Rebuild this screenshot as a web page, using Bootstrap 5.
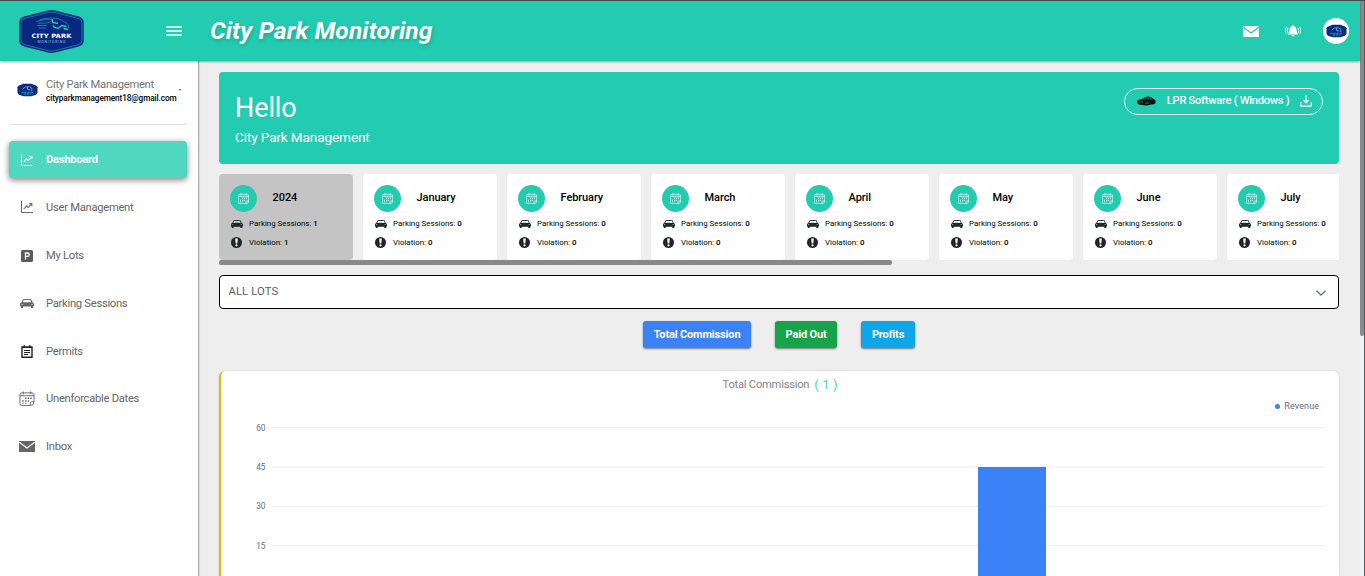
<!DOCTYPE html>
<html lang="en">
<head>
<meta charset="utf-8">
<meta name="viewport" content="width=device-width, initial-scale=1">
<title>City Park Monitoring</title>
<link href="https://cdn.jsdelivr.net/npm/bootstrap@5.3.0/dist/css/bootstrap.min.css" rel="stylesheet">
<style>
:root{--teal:#23ccb0;--navy:#06297f}
body{font-family:Roboto,"Liberation Sans",sans-serif;background:#eee;height:100vh;overflow:hidden;border-top:1px solid #44494b;font-size:11.2px;line-height:1.2}
svg{display:block;flex:none}
.topbar{height:60px;flex-shrink:0;background:var(--teal);box-shadow:0 1px 2px rgba(0,0,0,.35);z-index:3;padding:0 11px 0 19px}
.brand-title{font-size:24.6px;font-weight:700;font-style:italic;color:#fff;text-shadow:1px 2px 4px rgba(0,0,0,.18);margin-left:28px;line-height:28px;letter-spacing:.08px;white-space:nowrap}
.avatar{width:26px;height:26px}
.side{width:199px;border-right:1px solid #b0b0b0;box-shadow:1px 0 1px rgba(0,0,0,.08);padding:0 11px 0 9px;z-index:2}
.profile{height:63.5px;border-bottom:1px solid #e4e4e4;padding:17px 0 0 8px;margin-bottom:16.5px}
.profile-name{font-size:11.2px;color:#757575;line-height:14px;letter-spacing:-.25px}
.mail-line{font-size:8.2px;font-weight:500;color:#000;line-height:13px;letter-spacing:-.08px;white-space:nowrap}
.side-item{height:37.2px;margin-bottom:10.6px;padding-left:9px;color:#666;border-radius:4px;font-size:11.2px;letter-spacing:-.27px}
.side-item.low{padding-top:1.2px}
.side-item .ico{width:18px;margin-right:10px;display:flex;justify-content:center}
.side-item.on{background:#4fd7bf;color:#fff;font-weight:700;box-shadow:0 2px 6px rgba(0,0,0,.5)}
.main-area{padding:11px 21px 0 20px;min-width:0}
.hello{height:92px;background:var(--teal);border-radius:4px;color:#fff;padding:20px 16px 0}
.hello-big{font-size:27px;line-height:32px;letter-spacing:-.1px}
.hello-sub{font-size:13.6px;line-height:18px;margin-top:4px;letter-spacing:-.13px}
.lpr{width:199px;height:27px;border:1px solid #e8fffa;border-radius:14px;margin-top:-4px;padding:0 10px 1px 12px;font-size:11.2px;font-weight:500;letter-spacing:-.3px}
.months{margin-top:10px;height:86px;gap:10px;overflow:hidden}
.month{flex:0 0 134px;background:#fff;border-radius:4px;padding:11px 0 0 11px;color:#000}
.month.on{background:#c4c4c4}
.disc{width:27px;height:27px;background:var(--teal);color:#e9fffb}
.month-name{font-size:11px;font-weight:500;margin-left:15.600px;line-height:25px;letter-spacing:-.1px}
.fact{font-size:7.9px;line-height:12px;padding-left:1px;white-space:pre}
.fact svg{margin-right:6px}
.fact b{font-weight:500}
.thumb-x{width:673px;height:5px;background:#888;border-radius:2px}
.lots{height:34px;margin-top:10px;border:1.2px solid #000;border-radius:4px;background:#fff;color:#5c6169;padding:0 12px 0 8.5px;font-size:11.2px;letter-spacing:.15px}
.acts{margin-top:12px;gap:24px}
.act{height:27px;border:0;border-radius:3px;color:#fff;font-size:11px;font-weight:700;padding:0;box-shadow:0 1px 2px rgba(0,0,0,.5);line-height:27px;letter-spacing:-.16px}
.chart-card{margin-top:23px;height:205px;background:#fff;border-left:2px solid #eab308;border-radius:6px 6px 0 0;box-shadow:0 0 2px rgba(0,0,0,.15)}
.chart-title{font-size:11.2px;color:#858585;padding-top:5px;line-height:16px;height:30px;letter-spacing:-.24px}
.chart-title span{color:#4fd7a9;font-size:13px;margin-left:5px;letter-spacing:.1px;position:relative;top:1px}
.legend-line{font-size:9px;color:#666d78;height:10px;line-height:10px;padding-right:20px;gap:4px;letter-spacing:.1px}
.dot{width:5px;height:5px;background:#3b82f6}
.track{width:4px;background:#f1f1f1}
.thumb-y{height:335px;background:#8a8a8a;border-radius:0 0 2px 2px}
.edge{width:1px;background:#55595c}
</style>
</head>
<body>
<svg width="0" height="0" class="position-absolute" aria-hidden="true">
  <symbol id="crest" viewBox="0 0 65 43">
    <path d="M28 .8Q32.5-.6 37 .8L60 6.5Q64.5 8 64.7 12V31Q64.5 35 60 36.5L37 42.3Q32.5 43.6 28 42.3L5 36.5Q.5 35 .3 31V12Q.5 8 5 6.5Z" fill="#06297f"/>
    <path d="M29 2.5Q32.5 1.4 36 2.5L59 8.3Q62.8 9.3 63 13V30Q62.8 33.7 59 34.8L36 40.6Q32.5 41.7 29 40.6L6 34.8Q2.2 33.7 2 30V13Q2.2 9.3 6 8.3Z" fill="none" stroke="#238aa6" stroke-width=".8"/>
    <path d="M17 12Q22 8 31 8Q40 7.800 44 11L48 13.500Q50 15 49.500 18M20 11Q26 9 33 9.500L31 12.500Q25 13.500 19 13.200M18 15.500H28M20 18H27" fill="none" stroke="#238aa6" stroke-width=".8"/>
    <path d="M33.500 9V12.500L39 13.500M34 15.500Q35 18.500 40 18L42.500 15.500L47.500 16.500M44.500 18.500L49 19.500" fill="none" stroke="#2cc9b6" stroke-width="1.300"/>
  </symbol>
  <symbol id="mini" viewBox="0 0 22 14">
    <path d="M7 .5H15L20.500 2.500L21.500 4V10L20 12L15 13.600H7L2 12L.5 10V4L1.500 2.500Z" fill="#0a2c82"/>
    <path d="M6 6Q8 3 13 3.500L15.500 5V8M11 4V6.500L14 7" fill="none" stroke="#7fa9d8" stroke-width=".9"/><path d="M4.500 9.500H17.500M7 11.300H15" fill="none" stroke="#2e9fb8" stroke-width="1" stroke-dasharray="2.500 .7"/>
  </symbol>
  <symbol id="cal" viewBox="0 0 16 16">
    <g fill="none" stroke="currentColor" stroke-width="1"><path d="M4 .5v3M12 .5v3M2.500 2h11a2 2 0 0 1 2 2v7.500Q15.500 15.500 11.500 15.500h-9a2 2 0 0 1-2-2V4a2 2 0 0 1 2-2ZM.5 5h15M11.500 15.500V13a1.500 1.500 0 0 1 1.500-1.500h2.500"/></g>
    <path d="M6 7h1.500v1.500H6zM8.800 7h1.500v1.500H8.800zM11.600 7h1.500v1.500h-1.500zM3 9.900h1.500v1.500H3zM6 9.900h1.500v1.500H6zM8.800 9.900h1.500v1.500H8.800zM3 12.400h1.500v1.200H3zM6 12.400h1.500v1.200H6z" fill="currentColor"/>
  </symbol>
  <symbol id="car" viewBox="0 0 16 11" preserveAspectRatio="none">
    <path d="M4 .4Q8-.2 12 .4Q12.800.6 13.200 1.400L14.300 4L15.400 4.800Q16 5.400 16 6.400V9H15V11H12.500V9.300H3.500V11H1V9H0V6.400Q0 5.400 .6 4.800L1.700 4L2.800 1.400Q3.200.6 4 .4ZM4 1.500L3 4.100Q8 3.700 13 4.100L12 1.500Q8 1 4 1.500ZM1.500 5.800V6.900H4ZM14.500 5.800L12 6.900H14.500Z" fill="currentColor" fill-rule="evenodd"/>
  </symbol>
  <symbol id="warn" viewBox="0 0 16 16">
    <circle cx="8" cy="8" r="8" fill="#212529"/><path d="M6.100 2.300H9.900L9.200 9.500H6.800ZM8 10.500a1.600 1.600 0 1 1-.01 0Z" fill="#fff"/>
  </symbol>
  <symbol id="graph" viewBox="0 0 12 12">
    <path d="M.5 0V11.500H12" fill="none" stroke="currentColor" stroke-width="1"/><path d="M2.800 8L5.500 5L7.300 6.500L10.500 2.800M8.300 2.500H10.800V5" fill="none" stroke="currentColor" stroke-width="1.100"/>
  </symbol>
  <symbol id="mail" viewBox="0 0 16 11">
    <path d="M0 0H16V11H0Z" fill="currentColor"/><path d="M.3 1.200L8 7L15.700 1.200" fill="none" stroke="var(--fold)" stroke-width="1.100"/>
  </symbol>
</svg>
<div class="d-flex h-100">
  <div class="d-flex flex-column flex-grow-1 h-100" style="min-width:0">
    <header class="topbar d-flex align-items-center">
      <svg width="65" height="43" viewBox="0 0 65 43"><use href="#crest"/>
        <text x="32.500" y="27.500" text-anchor="middle" font-family="DejaVu Sans,sans-serif" font-weight="700" font-size="6" textLength="40" lengthAdjust="spacingAndGlyphs" fill="#fff">CITY PARK</text>
        <text x="32.500" y="32.500" text-anchor="middle" font-size="3.500" textLength="28" fill="#8fc0e8">MONITORING</text>
      </svg>
      <svg width="16" height="12" viewBox="0 0 16 12" style="margin-left:82px"><path d="M0 2H16M0 6H16M0 10H16" stroke="#fff" stroke-width="1.700"/></svg>
      <div class="brand-title">City Park Monitoring</div>
      <div class="d-flex align-items-center ms-auto text-white">
        <svg width="16" height="11" style="--fold:#23ccb0;margin-right:26px"><use href="#mail"/></svg>
        <svg width="16" height="14" viewBox="0 0 16 14" style="margin-right:22px"><path d="M8 1Q8.800 1 8.900 2Q11.300 2.700 11.500 5.500Q11.600 9 13 10.400H3Q4.400 9 4.500 5.500Q4.700 2.700 7.100 2Q7.200 1 8 1ZM6.500 11.200H9.500Q9.300 12.600 8 12.600T6.500 11.200Z" fill="#fff"/><path d="M3 3.800Q1.500 6.500 3 9.200M1.200 2.800Q-.7 6.500 1.200 10.200M13 3.800Q14.500 6.500 13 9.200M14.800 2.800Q16.700 6.500 14.800 10.200" fill="none" stroke="#fff" stroke-width=".8"/></svg>
        <div class="avatar bg-white rounded-circle d-flex align-items-center justify-content-center"><svg width="21" height="14"><use href="#mini"/></svg></div>
      </div>
    </header>
    <div class="d-flex flex-grow-1" style="min-height:0">
      <aside class="side bg-white flex-shrink-0">
        <div class="profile d-flex">
          <svg width="21" height="14" style="margin:5px 8px 0 0"><use href="#mini"/></svg>
          <div><div class="profile-name">City Park Management</div><div class="mail-line">cityparkmanagement18@gmail.com</div></div>
          <svg width="4" height="3" viewBox="0 0 4 3" style="margin:11px 0 0 1px"><path d="M.5 0H3.500L2 2Z" fill="#777"/></svg>
        </div>
        <nav>
          <div class="side-item on d-flex align-items-center"><span class="ico"><svg width="12" height="12"><use href="#graph"/></svg></span>Dashboard</div>
          <div class="side-item d-flex align-items-center"><span class="ico"><svg width="12" height="12"><use href="#graph"/></svg></span>User Management</div>
          <div class="side-item low d-flex align-items-center"><span class="ico"><svg width="12" height="12" viewBox="0 0 12 12"><rect width="12" height="12" rx="1.500" fill="#5c5c5c"/><path d="M4.500 9.500V3H6.500Q8.200 3 8.200 4.700T6.500 6.400H4.500" fill="none" stroke="#fff" stroke-width="1.300"/></svg></span>My Lots</div>
          <div class="side-item low d-flex align-items-center"><span class="ico"><svg width="14" height="9"><use href="#car"/></svg></span>Parking Sessions</div>
          <div class="side-item low d-flex align-items-center"><span class="ico"><svg width="12" height="13" viewBox="0 0 12 13"><path d="M1 2H11V12.200H1Z" fill="none" stroke="#222" stroke-width="1.400"/><path d="M3.200 0V3M8.800 0V3M1 2.500H11" stroke="#222" stroke-width="1.200"/><path d="M3 5.500H9M3 7.500H9M3 9.500H7" stroke="#222"/></svg></span>Permits</div>
          <div class="side-item d-flex align-items-center"><span class="ico"><svg width="16" height="15"><use href="#cal"/></svg></span>Unenforcable Dates</div>
          <div class="side-item d-flex align-items-center"><span class="ico"><svg width="16" height="11" style="--fold:#fff"><use href="#mail"/></svg></span>Inbox</div>
        </nav>
      </aside>
      <main class="main-area flex-grow-1">
        <section class="hello d-flex justify-content-between">
          <div><div class="hello-big">Hello</div><div class="hello-sub">City Park Management</div></div>
          <div class="lpr d-flex align-items-center justify-content-between">
            <svg width="19" height="10" viewBox="0 0 19 10"><path d="M0 5.500Q1 3.500 5 3Q8 .4 11 .5Q15 .6 16.500 3Q19 3.500 18.500 7Q17 8.800 14 8.500Q10 10 5.500 9Q0 9 0 5.500Z" fill="#04110f"/><path d="M6.500 3.400Q9 1.500 11 1.800L11.500 3.400M2 6H6M12.800 2L14.500 3.300M8 7H12" stroke="#23a58f" stroke-width=".7" fill="none"/></svg>
            <span>LPR Software ( Windows )</span>
            <svg width="12" height="12" viewBox="0 0 12 12"><path d="M6 0V7.500M3.200 5L6 7.800L8.800 5M.7 7.500V10Q.7 11.200 2 11.200H10Q11.300 11.200 11.300 10V7.500" fill="none" stroke="#e9fff4" stroke-width="1.400"/></svg>
          </div>
        </section>
        <section class="months d-flex" id="months"></section>
        <div class="thumb-x"></div>
        <div class="lots d-flex align-items-center justify-content-between"><span>ALL LOTS</span><svg width="10" height="6" viewBox="0 0 10 6" style="margin-top:2px"><path d="M.5.7L5 5L9.500.7" fill="none" stroke="#6b7280" stroke-width="1.300"/></svg></div>
        <div class="acts d-flex justify-content-center">
          <button class="act" style="width:108px;background:#3b82f6">Total Commission</button>
          <button class="act" style="width:62px;background:#16a34a">Paid Out</button>
          <button class="act" style="width:54px;background:#0ea5e9">Profits</button>
        </div>
        <section class="chart-card">
          <div class="chart-title text-center">Total Commission<span>( 1 )</span></div>
          <div class="legend-line d-flex justify-content-end align-items-center"><span class="dot rounded-circle"></span>Revenue</div>
          <svg width="1118" height="165" viewBox="221 411 1118 165">
            <g stroke="#f0f1f3" stroke-width="1"><path d="M272 427.500H1325M272 506.500H1325M272 545.500H1325"/><path d="M272 467H1325" stroke-width="2" stroke="#f6f6f7"/></g>
            <g font-size="8.300" fill="#666d78" text-anchor="end" font-family="Roboto,sans-serif"><text x="265.500" y="431">60</text><text x="265.500" y="470">45</text><text x="265.500" y="509">30</text><text x="265.500" y="549">15</text></g>
            <rect x="978" y="467" width="68" height="109" fill="#3b82f6"/>
          </svg>
        </section>
      </main>
    </div>
  </div>
  <div class="track"><div class="thumb-y"></div></div>
  <div class="edge"></div>
</div>
<script>
const months = [["2024",1,1],["January",0,0],["February",0,0],["March",0,0],["April",0,0],["May",0,0],["June",0,0],["July",0,0]];
document.getElementById("months").innerHTML = months.map(([name,sessions,violations],i)=>`
  <div class="month ${i?"":"on"}">
    <div class="d-flex"><div class="disc rounded-circle d-flex align-items-center justify-content-center"><svg width="11" height="11"><use href="#cal"/></svg></div><div class="month-name">${name}</div></div>
    <div class="fact d-flex align-items-center" style="margin-top:6px"><svg width="12" height="8" color="#212529"><use href="#car"/></svg><span>Parking Sessions: <b>${sessions}</b></span></div>
    <div class="fact d-flex align-items-center" style="margin-top:6.500px"><svg width="11" height="11" class="me-2"><use href="#warn"/></svg><span style="margin-left:-1px">Violation: <b>${violations}</b></span></div>
  </div>`).join("");
</script>
<script src="https://cdn.jsdelivr.net/npm/bootstrap@5.3.0/dist/js/bootstrap.bundle.min.js"></script>
</body>
</html>
